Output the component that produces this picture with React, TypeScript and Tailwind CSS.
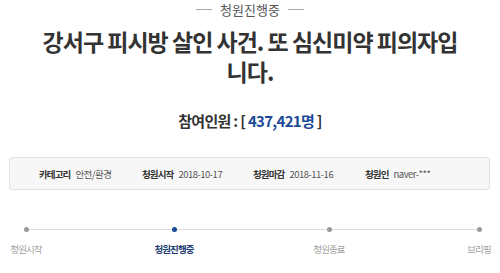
import React from "react";

const font = { fontFamily: '"Noto Sans CJK KR", "Noto Sans", sans-serif' };

export default function App() {
  const steps = [
    { label: "청원시작", active: false },
    { label: "청원진행중", active: true },
    { label: "청원종료", active: false },
    { label: "브리핑", active: false },
  ];
  const info = [
    { k: "카테고리", v: "안전/환경", w: "w-[103px]" },
    { k: "청원시작", v: "2018-10-17", w: "w-[111px]" },
    { k: "청원마감", v: "2018-11-16", w: "w-[112px]" },
    { k: "청원인", v: "naver-***", w: "w-[100px]" },
  ];
  return (
    <div className="w-[500px] h-[273px] bg-white overflow-hidden relative" style={font}>
      <div className="flex items-center justify-center gap-[8px] pt-[1px] h-[18px]">
        <div className="w-[16px] h-px bg-[#aaaaaa]" />
        <span className="text-[13px] leading-[16px] text-[#555555]">청원진행중</span>
        <div className="w-[16px] h-px bg-[#aaaaaa]" />
      </div>
      <h1 className="mt-[8px] text-center text-[23px] leading-[30px] font-bold text-[#333333] tracking-[-1px]">
        강서구 피시방 살인 사건. 또 심신미약 피의자입
        <br />
        니다.
      </h1>
      <div className="mt-[25px] text-center text-[15px] leading-[20px] font-bold text-[#333333] tracking-[-0.7px]">
        참여인원 : [ <span className="text-[#1c4a96]">437,421명</span> ]
      </div>
      <div className="mx-[9px] w-[481px] mt-[26px] h-[33px] border border-[#e2e2e2] bg-[#f7f7f7] rounded-[3px] flex items-center pl-[29px] text-[9.5px] leading-[12px] tracking-[-0.9px] whitespace-nowrap">
        {info.map((it) => (
          <div key={it.k} className={"flex items-center shrink-0 " + it.w}>
            <span className="font-bold text-[#333333]">{it.k}</span>
            <span className="ml-[5px] text-[#555555] tracking-[-0.5px]">{it.v}</span>
          </div>
        ))}
      </div>
      <div className="relative mt-[37px]">
        <div className="absolute left-[25px] right-[21px] top-[2px] h-px bg-[#dddddd]" />
        <div className="relative flex pl-[1px]">
          {steps.map((s, i) => (
            <div
              key={s.label}
              className={
                "w-[50px] shrink-0 flex flex-col items-center " +
                (i === 1 ? "ml-[98px]" : i === 2 ? "ml-[105px]" : i === 3 ? "ml-[100px]" : "")
              }
            >
              <div className={"w-[5px] h-[5px] rounded-full " + (s.active ? "bg-[#1c4a96]" : "bg-[#9a9a9a]")} />
              <span
                className={
                  "mt-[11px] whitespace-nowrap text-[9.5px] leading-[12px] tracking-[-0.9px] " +
                  (s.active ? "font-bold text-[#1e3c72]" : "text-[#a0a0a0]")
                }
              >
                {s.label}
              </span>
            </div>
          ))}
        </div>
      </div>
    </div>
  );
}
